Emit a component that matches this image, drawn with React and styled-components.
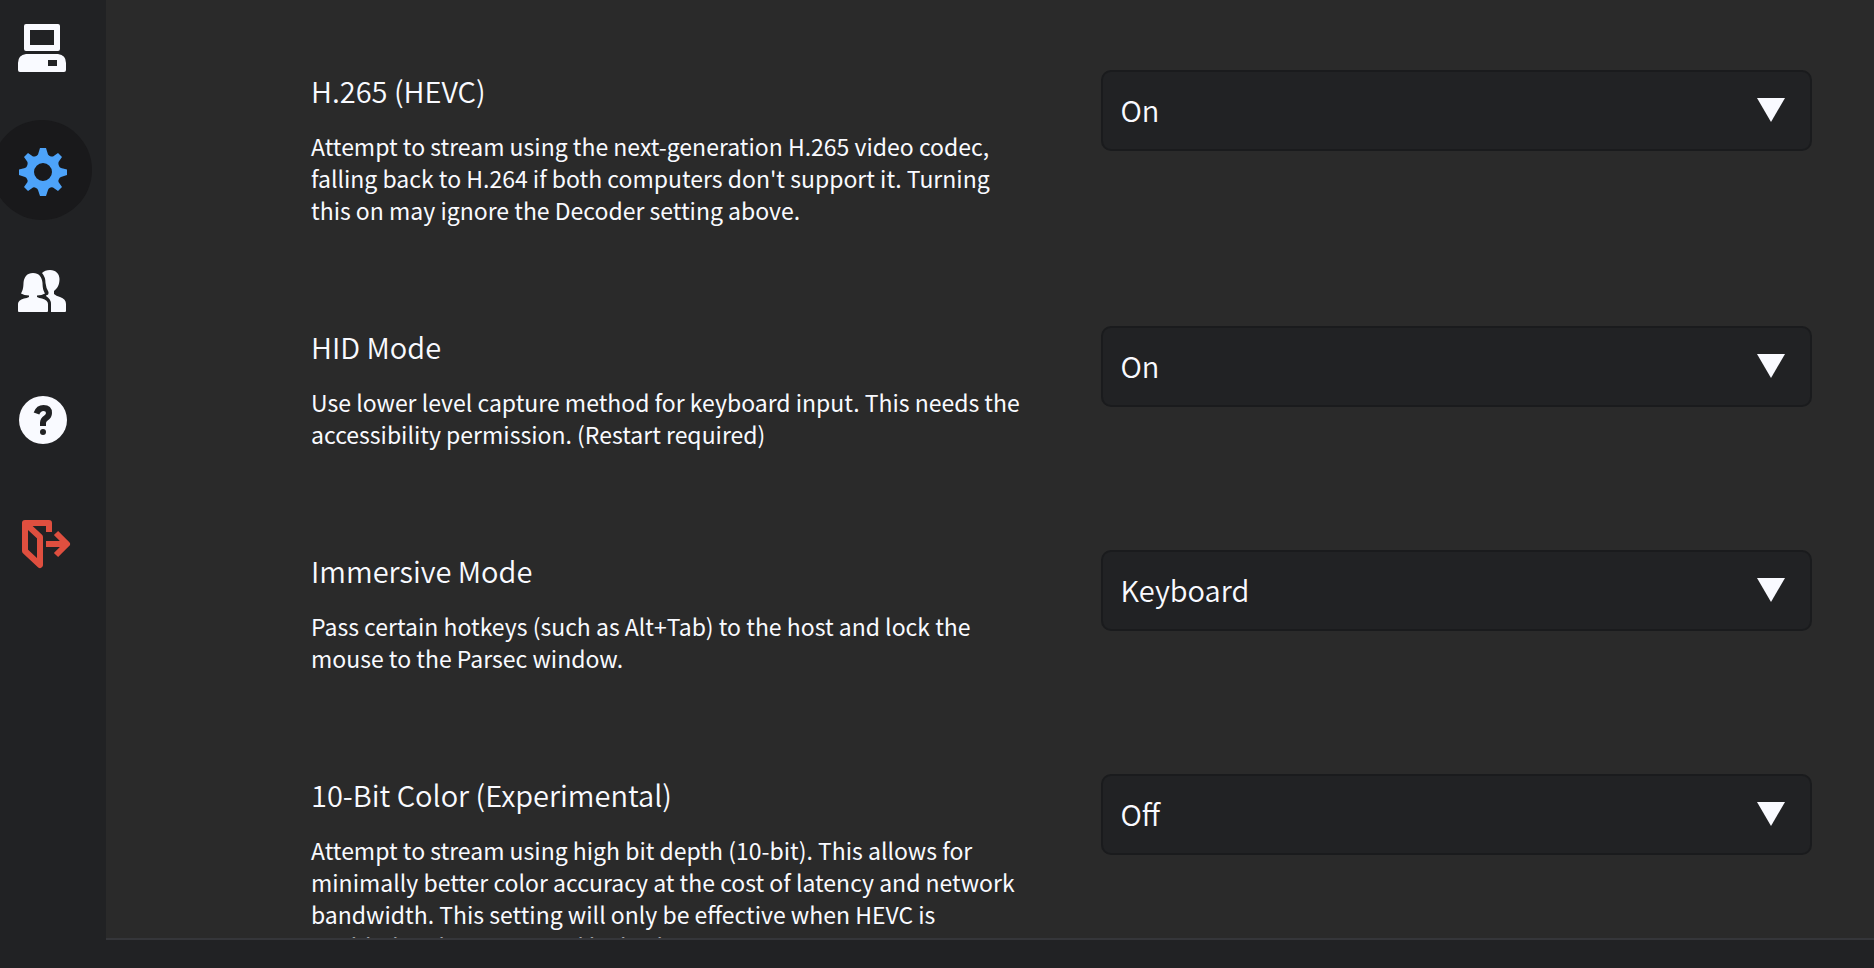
import React from "react";
import styled, { createGlobalStyle, css } from "styled-components";

const GlobalStyle = createGlobalStyle`
  * {
    box-sizing: border-box;
  }

  body {
    margin: 0;
    background: #2a2a2a;
    color: #f9faff;
    font-family: "Noto Sans CJK JP", "Noto Sans", sans-serif;
    font-weight: 350;
  }
`;

const settings = [
  {
    id: "hevc",
    title: "H.265 (HEVC)",
    description:
      "Attempt to stream using the next-generation H.265 video codec, falling back to H.264 if both computers don't support it. Turning this on may ignore the Decoder setting above.",
    value: "On",
    options: ["On", "Off"]
  },
  {
    id: "hid",
    title: "HID Mode",
    description:
      "Use lower level capture method for keyboard input. This needs the accessibility permission. (Restart required)",
    value: "On",
    options: ["On", "Off"]
  },
  {
    id: "immersive",
    title: "Immersive Mode",
    description:
      "Pass certain hotkeys (such as Alt+Tab) to the host and lock the mouse to the Parsec window.",
    value: "Keyboard",
    options: ["Off", "Keyboard", "Mouse", "Keyboard & Mouse"]
  },
  {
    id: "color",
    title: "10-Bit Color (Experimental)",
    description:
      "Attempt to stream using high bit depth (10-bit). This allows for minimally better color accuracy at the cost of latency and network bandwidth. This setting will only be effective when HEVC is enabled and is supported by both computers.",
    value: "Off",
    options: ["On", "Off"]
  }
];

const ComputerIcon = () => (
  <Icon viewBox="0 0 48 48" aria-hidden="true">
    <path
      fillRule="evenodd"
      d="M8 0H40Q42 0 42 2V25Q42 27 40 27H8Q6 27 6 25V2Q6 0 8 0ZM12 6V21H36V6Z"
    />
    <path
      fillRule="evenodd"
      d="M8 30H40Q48 31 48 39V46Q48 48 46 48H2Q0 48 0 46V39Q0 31 8 30ZM30 36V42H39V36Z"
    />
  </Icon>
);

const GearIcon = () => (
  <Icon viewBox="-1 0 48 48" aria-hidden="true">
    <path
      fillRule="evenodd"
      d="M21 0H27L29 6.500Q30 8 32 8.500L34 8.500L39 5L43 9L39.500 14Q39 16 40 18Q40.500 19.500 42 20L48 21.500V27L42 29Q40.500 29.500 40 31Q39 32.500 39.500 34L43 39L39 43L34 39.500Q32 39 30.500 40Q29.500 40.500 29 42L27 48H21L19 42Q18.500 40.500 17 40Q15.500 39 14 39.500L9 43L5 39L8.500 34Q9 32.500 8 31Q7.500 29.500 6 29L0 27V21.500L6 20Q7.500 19.500 8 18Q9 16 8.500 14L5 9L9 5L14 8.500L16 8.500Q18 8 19 6.500ZM24 15A9 9 0 1 0 24 33A9 9 0 1 0 24 15Z"
    />
  </Icon>
);

const FriendsIcon = () => (
  <Icon viewBox="0 5 48 48" aria-hidden="true">
    <path d="M15 6C9 6 6 10 5.500 16C5.300 21 5 23 3 26.500Q6 28.500 11 28.500V30Q9 31 6 31.500Q0 33 0 37V44Q0 45 1 45H29Q30 45 30 44V37Q30 33 24 31.500Q21 31 19 30V28.500Q24 28.500 27 26.500C25 23 24.700 21 24.500 16C24 10 21 6 15 6Z" />
    <path d="M24 6C26 4 28.500 3 32 3C38 3 41.500 7 41.500 12C41.500 17 40 21 36 24V27Q38 29 42 30Q48 32 48 37V44Q48 45 47 45H33V37Q33 32 28 29V28.500Q31 28 30.500 25Q28 21 27.500 16Q27.500 10 24 6Z" />
  </Icon>
);

const HelpIcon = () => (
  <Icon viewBox="-1 0 48 48" aria-hidden="true">
    <circle cx="24" cy="24" r="24" />
    <path
      d="M17.500 17.500Q19.500 12 24.500 12Q30 12 30 17Q30 20 27 22Q24 24 24 27V30"
      fill="none"
      stroke="#212224"
      strokeWidth="6"
    />
    <circle cx="24" cy="36" r="3" fill="#212224" />
  </Icon>
);

const LogoutIcon = () => (
  <Icon viewBox="-4 0 48 48" aria-hidden="true">
    <path
      d="M27 12V3H3V31L18 45V17L4 4M24 24H44M34 13L45 24L34 35"
      fill="none"
      stroke="currentColor"
      strokeWidth="6"
      strokeLinejoin="round"
    />
  </Icon>
);

const Setting = ({ setting }) => (
  <Row>
    <div>
      <Title htmlFor={setting.id}>{setting.title}</Title>
      <Description id={`${setting.id}-text`}>{setting.description}</Description>
    </div>
    <SelectBox>
      <Select
        id={setting.id}
        defaultValue={setting.value}
        aria-describedby={`${setting.id}-text`}
      >
        {setting.options.map(option => (
          <option key={option}>{option}</option>
        ))}
      </Select>
      <Arrow viewBox="0 0 28 24" aria-hidden="true">
        <path d="M0 0H28L14 24Z" />
      </Arrow>
    </SelectBox>
  </Row>
);

const App = () => (
  <Page>
    <GlobalStyle />
    <Sidebar aria-label="Main">
      <NavButton aria-label="Computers">
        <ComputerIcon />
      </NavButton>
      <NavButton aria-label="Settings" aria-current="page" $active>
        <GearIcon />
      </NavButton>
      <NavButton aria-label="Friends">
        <FriendsIcon />
      </NavButton>
      <NavButton aria-label="Help">
        <HelpIcon />
      </NavButton>
      <NavButton aria-label="Log out" $danger>
        <LogoutIcon />
      </NavButton>
    </Sidebar>
    <Main>
      <Settings>
        {settings.map(setting => (
          <Setting key={setting.id} setting={setting} />
        ))}
      </Settings>
      <Footer />
    </Main>
  </Page>
);

export default App;

const Page = styled.div`
  display: flex;
  height: 100vh;
  overflow: hidden;
`;

const Sidebar = styled.nav`
  display: flex;
  flex-direction: column;
  align-items: center;
  flex: none;
  gap: 24px;
  width: 106px;
  padding-right: 22px;
  background: #212224;
`;

const NavButton = styled.button`
  display: flex;
  align-items: center;
  justify-content: center;
  flex: none;
  width: 100px;
  height: 100px;
  padding: 4px 0 0;
  border: 0;
  border-radius: 50%;
  background: none;
  color: #f9faff;
  cursor: pointer;

  &:first-child {
    height: 96px;
    padding: 0;
  }

  ${props =>
    props.$active &&
    css`
      background: #19191b;
      color: #4da3fa;
    `}

  ${props =>
    props.$danger &&
    css`
      color: #df4f3f;
    `}
`;

const Icon = styled.svg`
  width: 48px;
  height: 48px;
  overflow: visible;
  fill: currentColor;
`;

const Main = styled.main`
  display: flex;
  flex-direction: column;
  flex: 1;
  min-width: 0;
`;

const Settings = styled.div`
  flex: 1;
  min-height: 0;
  padding: 70px 62px 0 205px;
  overflow: hidden;
`;

const Row = styled.section`
  display: grid;
  grid-template-columns: 1fr 1fr;
  align-items: start;
  gap: 78px;
  margin-bottom: 100px;
`;

const Title = styled.label`
  display: block;
  margin-bottom: 20px;
  font-size: 29px;
  line-height: 40px;
`;

const Description = styled.p`
  margin: 0;
  font-size: 23px;
  font-weight: 400;
  line-height: 32px;
`;

const SelectBox = styled.div`
  position: relative;
`;

const Select = styled.select`
  display: block;
  width: 100%;
  height: 81px;
  padding: 0 64px 4px 18px;
  border: 2px solid #1a1b1d;
  border-radius: 10px;
  appearance: none;
  background: #212224;
  color: #f9faff;
  font-family: inherit;
  font-size: 29px;
  font-weight: inherit;
`;

const Arrow = styled.svg`
  position: absolute;
  top: 28px;
  right: 27px;
  width: 28px;
  height: 24px;
  fill: #f9faff;
  pointer-events: none;
`;

const Footer = styled.footer`
  flex: none;
  height: 30px;
  border-top: 2px solid #35363a;
  background: #212224;
`;
